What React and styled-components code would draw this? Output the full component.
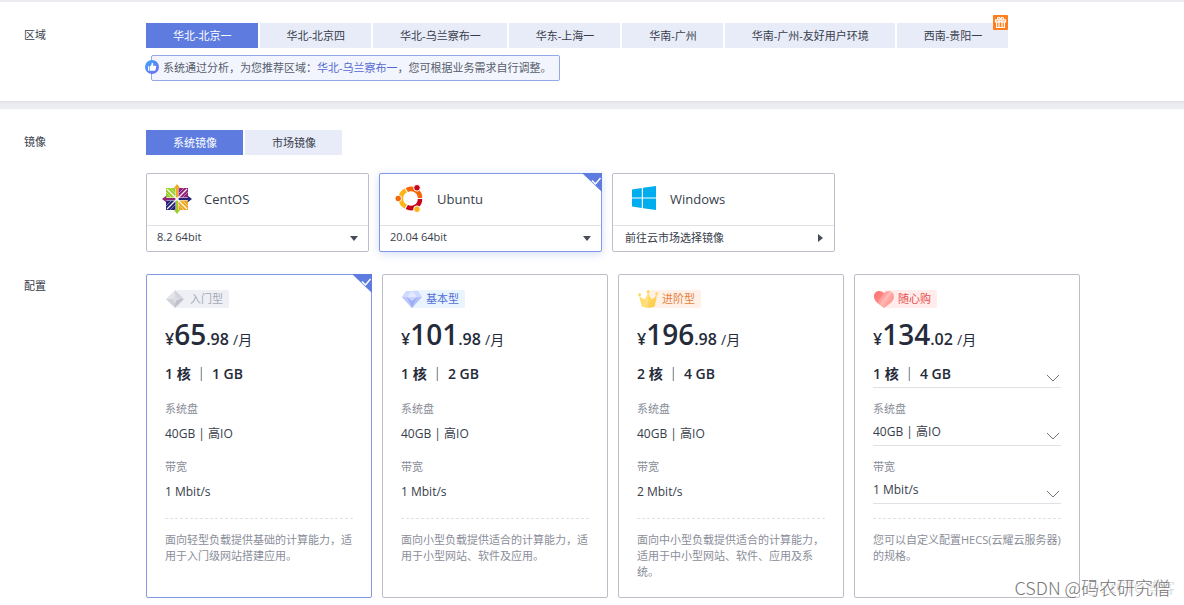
import React, { useState } from 'react';
import styled, { createGlobalStyle } from 'styled-components';

const regions = [
  { name: '华北-北京一' },
  { name: '华北-北京四' },
  { name: '华北-乌兰察布一' },
  { name: '华东-上海一' },
  { name: '华南-广州' },
  { name: '华南-广州-友好用户环境' },
  { name: '西南-贵阳一', gift: true },
];

const imageTypes = ['系统镜像', '市场镜像'];

const systems = [
  { name: 'CentOS', version: '8.2 64bit', Logo: CentosLogo },
  { name: 'Ubuntu', version: '20.04 64bit', Logo: UbuntuLogo },
  { name: 'Windows', market: '前往云市场选择镜像', Logo: WindowsLogo },
];

const plans = [
  {
    name: '入门型', Icon: GreyGem, color: '#a5a9b8', bg: '#eff0f5',
    yuan: '65', cents: '.98', spec: '1 核 ｜ 1 GB', disk: '40GB | 高IO', band: '1 Mbit/s',
    desc: '面向轻型负载提供基础的计算能力，适用于入门级网站搭建应用。',
  },
  {
    name: '基本型', Icon: BlueGem, color: '#5470d6', bg: '#e9f4ff',
    yuan: '101', cents: '.98', spec: '1 核 ｜ 2 GB', disk: '40GB | 高IO', band: '1 Mbit/s',
    desc: '面向小型负载提供适合的计算能力，适用于小型网站、软件及应用。',
  },
  {
    name: '进阶型', Icon: Crown, color: '#e5823c', bg: '#fff1e8',
    yuan: '196', cents: '.98', spec: '2 核 ｜ 4 GB', disk: '40GB | 高IO', band: '2 Mbit/s',
    desc: '面向中小型负载提供适合的计算能力，适用于中小型网站、软件、应用及系统。',
  },
  {
    name: '随心购', Icon: Heart, color: '#e8504f', bg: '#ffeceb', custom: true,
    yuan: '134', cents: '.02', spec: '1 核 ｜ 4 GB', disk: '40GB | 高IO', band: '1 Mbit/s',
    desc: '您可以自定义配置HECS(云耀云服务器)的规格。',
  },
];

function App() {
  const [region, setRegion] = useState(regions[0].name);
  const [imageType, setImageType] = useState(imageTypes[0]);
  const [system, setSystem] = useState('Ubuntu');
  const [plan, setPlan] = useState('入门型');

  return (
    <Page>
      <GlobalStyle />
      <Section>
        <Row>
          <RowLabel>区域</RowLabel>
          <div>
            <Tabs>
              {regions.map((r) => (
                <Tab key={r.name} type="button" $active={r.name === region} onClick={() => setRegion(r.name)}>
                  {r.name}
                  {r.gift && <GiftBadge />}
                </Tab>
              ))}
            </Tabs>
            <Notice>
              <ThumbBadge />
              系统通过分析，为您推荐区域：
              <NoticeLink href="#region">华北-乌兰察布一</NoticeLink>
              ，您可根据业务需求自行调整。
            </Notice>
          </div>
        </Row>
      </Section>
      <Divider />
      <Section>
        <Row>
          <RowLabel>镜像</RowLabel>
          <div>
            <Tabs>
              {imageTypes.map((t) => (
                <Tab key={t} type="button" $active={t === imageType} onClick={() => setImageType(t)}>
                  {t}
                </Tab>
              ))}
            </Tabs>
            <SystemGrid>
              {systems.map((s) => (
                <SystemCard key={s.name} $active={s.name === system}>
                  <SystemHead>
                    <HiddenRadio name="system" checked={s.name === system} onChange={() => setSystem(s.name)} />
                    <s.Logo />
                    {s.name}
                  </SystemHead>
                  {s.market ? (
                    <MarketLink href="#market">
                      {s.market}
                      <svg width="5" height="8" viewBox="0 0 5 8"><path d="M0 0l5 4-5 4z" fill="#464c59" /></svg>
                    </MarketLink>
                  ) : (
                    <VersionBox>
                      <VersionSelect aria-label={`${s.name} version`}>
                        <option>{s.version}</option>
                      </VersionSelect>
                      <svg width="8" height="5" viewBox="0 0 8 5"><path d="M0 0h8L4 5z" fill="#464c59" /></svg>
                    </VersionBox>
                  )}
                  {s.name === system && <Corner />}
                </SystemCard>
              ))}
            </SystemGrid>
          </div>
        </Row>
        <Row>
          <RowLabel>配置</RowLabel>
          <PlanGrid>
            {plans.map((p) => (
              <PlanCard key={p.name} $active={p.name === plan}>
                <PlanHead>
                  <HiddenRadio name="plan" checked={p.name === plan} onChange={() => setPlan(p.name)} />
                  <p.Icon />
                  <PlanTag $color={p.color} $bg={p.bg}>{p.name}</PlanTag>
                </PlanHead>
                <Price>
                  ¥<Yuan>{p.yuan}</Yuan>{p.cents} <Unit>/月</Unit>
                </Price>
                <Field value={p.spec} label="规格" custom={p.custom} strong />
                <FieldLabel>系统盘</FieldLabel>
                <Field value={p.disk} label="系统盘" custom={p.custom} />
                <FieldLabel>带宽</FieldLabel>
                <Field value={p.band} label="带宽" custom={p.custom} />
                <Description>{p.desc}</Description>
                {p.name === plan && <Corner />}
              </PlanCard>
            ))}
          </PlanGrid>
        </Row>
      </Section>
      <Watermark>
        <WatermarkBack>@51CTO博客</WatermarkBack>
        <WatermarkFront>CSDN @码农研究僧</WatermarkFront>
      </Watermark>
    </Page>
  );
}

function Field({ value, label, custom, strong }) {
  if (!custom) {
    return <FieldText $strong={strong}>{value}</FieldText>;
  }
  return (
    <FieldBox>
      <FieldSelect aria-label={label} $strong={strong}>
        <option>{value}</option>
      </FieldSelect>
      <svg width="14" height="8" viewBox="0 0 14 8">
        <path d="M1 1l6 6 6-6" fill="none" stroke="#71757f" />
      </svg>
    </FieldBox>
  );
}

function Corner() {
  return (
    <CornerSvg width="20" height="19" viewBox="0 0 20 19">
      <path d="M0 0h20v19z" fill="#5e7ce0" />
      <path d="M10 7.5l3.500 3.500 5-6" fill="none" stroke="#fff" strokeWidth="1.5" />
    </CornerSvg>
  );
}

function GiftBadge() {
  return (
    <GiftSvg width="15" height="15" viewBox="0 0 15 15">
      <rect width="15" height="15" rx="1" fill="#ff7d1a" />
      <g fill="none" stroke="#fff" strokeWidth="1.2">
        <path d="M2.5 4.8h10v2h-10zM3.6 7v5.5h7.8V7M6 5v7.5M9 5v7.5" />
        <path d="M7.5 4.5C6.5 1.6 3.9 2 4.6 4.5M7.5 4.5C8.5 1.6 11.1 2 10.4 4.5" />
      </g>
    </GiftSvg>
  );
}

function ThumbBadge() {
  return (
    <ThumbSvg width="14" height="14" viewBox="0 0 14 14">
      <defs>
        <linearGradient id="thumb" x1="0" y1="0" x2="1" y2="1">
          <stop offset="0.1" stopColor="#3fa2f8" />
          <stop offset="1" stopColor="#7a68ee" />
        </linearGradient>
      </defs>
      <circle cx="7" cy="7" r="7" fill="url(#thumb)" />
      <path d="M3 6.3h1.4v4.4H3zM5 6.2C6.3 5.4 6.7 4.3 6.7 2.9c1.3-.5 2 .9 1.3 2.8h2.3c.8 0 1 .5.9 1.2l-.6 2.9c-.1.6-.5.9-1.1.9H5z" fill="#fff" />
    </ThumbSvg>
  );
}

function CentosLogo() {
  return (
    <svg width="30" height="30" viewBox="0 0 30 30">
      <path d="M4 4h9.500v9.500H4z" fill="#9ccd2a" />
      <path d="M16.500 4H26v9.500h-9.500z" fill="#932279" />
      <path d="M16.500 16.500H26V26h-9.500z" fill="#efa724" />
      <path d="M4 16.500h9.500V26H4z" fill="#262577" />
      <path d="M5 5l20 20M25 5L5 25" stroke="#fff" strokeWidth="1.1" />
      <path d="M8 4l5.500 5.500M4 8l5.500 5.500M22 4l-5.500 5.500M26 8l-5.500 5.500M26 22l-5.500-5.500M22 26l-5.500-5.500M4 22l5.500-5.500M8 26l5.500-5.500" stroke="#fff" strokeWidth="0.6" opacity="0.7" />
      <path d="M15 0l3.200 4.200H16V13l-1 2-1-2V4.200h-2.200z" fill="#efa724" />
      <path d="M30 15l-4.200 3.200V16H17l-2-1 2-1h8.800v-2.200z" fill="#262577" />
      <path d="M15 30l-3.200-4.200H14V17l1-2 1 2v8.800h2.200z" fill="#9ccd2a" />
      <path d="M0 15l4.200-3.200V14H13l2 1-2 1H4.200v2.200z" fill="#932279" />
      <circle cx="15" cy="15" r="1.800" fill="#fff" opacity="0.8" />
    </svg>
  );
}

function UbuntuLogo() {
  return (
    <svg width="30" height="30" viewBox="0 0 30 30">
      <g fill="none" strokeWidth="4.600">
        <path d="M11.400 22.800A9 9 0 0 1 11.400 6.200" stroke="#fdb515" />
        <path d="M11.400 6.200A9 9 0 0 1 25 14.500" stroke="#f76707" />
        <path d="M25 14.500A9 9 0 0 1 11.400 22.800" stroke="#c8041a" />
      </g>
      <path d="M16 14.500h13M16 14.500L9.500 3.200M16 14.500L9.500 25.800" stroke="#fff" strokeWidth="1.1" />
      <g stroke="#fff" strokeWidth="1">
        <circle cx="3.200" cy="14.500" r="3.300" fill="#f76707" />
        <circle cx="22" cy="3.800" r="3.300" fill="#c8041a" />
        <circle cx="22" cy="25.200" r="3.300" fill="#fdb515" />
      </g>
    </svg>
  );
}

function WindowsLogo() {
  return (
    <svg width="30" height="30" viewBox="0 0 30 30">
      <path d="M4 5.500L13.800 4v9.400H4zM15 3.800L28 2v11.400H15zM4 14.600h9.800V24L4 22.500zM15 14.600h13V26l-13-1.800z" fill="#00adef" />
    </svg>
  );
}

function GreyGem() {
  return (
    <TagIcon width="20" height="18" viewBox="0 0 20 18">
      <path d="M9 0v9H0z" fill="#e4e5ea" />
      <path d="M9 0l9 9H9z" fill="#d3d4db" />
      <path d="M0 9h9v9z" fill="#cfd0d8" />
      <path d="M18 9l-9 9V9z" fill="#bfc0ca" />
      <path d="M9 4l1.500 3.500L14 9l-3.500 1.500L9 14l-1.500-3.500L4 9l3.500-1.500z" fill="#dcdde3" />
    </TagIcon>
  );
}

function BlueGem() {
  return (
    <TagIcon width="20" height="18" viewBox="0 0 20 18">
      <path d="M4.500 1h11L20 7 10 18 0 7z" fill="#b4c0fa" />
      <path d="M4.500 1h11L20 7H0z" fill="#d0d9ff" />
      <path d="M5 7l5-6 5 6z" fill="#e4e9ff" />
      <path d="M0 7h5l5 11z" fill="#bdc9fc" />
      <path d="M5 7h10l-5 11z" fill="#9eaef5" />
      <path d="M5 7h10l-5 4z" fill="#c9d3ff" />
    </TagIcon>
  );
}

function Crown() {
  return (
    <TagIcon width="20" height="18" viewBox="0 0 20 18">
      <defs>
        <linearGradient id="crown" x1="0" y1="0" x2="1" y2="1">
          <stop offset="0" stopColor="#ffe98f" />
          <stop offset="1" stopColor="#ffc83a" />
        </linearGradient>
      </defs>
      <g fill="url(#crown)">
        <path d="M1 5q3 4 5.500 4Q9 7 10 1q1.500 6.500 4 8 3-.5 5-6-.5 8-2.500 13.500Q10 19 4 16.500 2 11 1 5z" />
        <circle cx="1.500" cy="4.500" r="1.500" />
        <circle cx="10" cy="1.500" r="1.500" />
        <circle cx="18.500" cy="3.500" r="1.500" />
      </g>
      <path d="M4 16.500Q7 9 10 3v14.800Q6.500 17.500 4 16.500z" fill="#fff" opacity="0.2" />
    </TagIcon>
  );
}

function Heart() {
  return (
    <TagIcon width="20" height="18" viewBox="0 0 20 18">
      <defs>
        <linearGradient id="heart" x1="0" y1="0.2" x2="1" y2="0.8">
          <stop offset="0" stopColor="#ff7272" />
          <stop offset="0.450" stopColor="#ff8d8a" />
          <stop offset="0.550" stopColor="#ffb5b0" />
          <stop offset="1" stopColor="#ff8582" />
        </linearGradient>
      </defs>
      <path d="M10 3C7-.5 0 .2 0 6.500 0 11 5 14.500 10 18c5-3.500 10-7 10-11.500C20 .2 13-.5 10 3z" fill="url(#heart)" />
      <path d="M10 3c2-2.500 5.500-2.800 7.800-1L6.500 15.500 3.500 13z" fill="#fff" opacity="0.200" />
    </TagIcon>
  );
}

export default App;

const GlobalStyle = createGlobalStyle`
  * {
    box-sizing: border-box;
  }
  body {
    margin: 0;
    background: #fff;
    color: #373d4b;
    font-family: "Open Sans", "Noto Sans CJK SC", sans-serif;
    font-size: 11px;
    line-height: 16px;
  }
  button, select, input {
    font: inherit;
    color: inherit;
  }
  a {
    text-decoration: none;
  }
`;

const Page = styled.div`
  position: relative;
  border-top: 2px solid #ebecf0;
  padding-bottom: 7px;
`;

const Section = styled.section`
  display: flex;
  flex-direction: column;
  gap: 22px;
  padding: 21px 24px 0;
`;

const Divider = styled.div`
  height: 8px;
  margin-top: 20px;
  background: linear-gradient(#dfe0e5, #ecedf2 3px);
`;

const Row = styled.div`
  display: grid;
  grid-template-columns: 122px minmax(0, 1fr);
`;

const RowLabel = styled.div`
  line-height: 24px;
`;

const Tabs = styled.div`
  display: flex;
  gap: 2px;
`;

const Tab = styled.button`
  position: relative;
  height: 25px;
  padding: 0 26px 0 27px;
  border: 0;
  line-height: 24px;
  white-space: nowrap;
  cursor: pointer;
  color: ${(p) => (p.$active ? '#fff' : '#373d4b')};
  background: ${(p) => (p.$active ? '#5e7ce0' : '#e8ecf9')};
`;

const GiftSvg = styled.svg`
  position: absolute;
  top: -8px;
  right: 0;
`;

const Notice = styled.div`
  position: relative;
  width: fit-content;
  margin: 7px 0 0 5px;
  padding: 0 7px 0 11px;
  border: 1px solid #93a7eb;
  border-radius: 2px;
  background: #f2f5fd;
  color: #575d6c;
  line-height: 24px;
`;

const ThumbSvg = styled.svg`
  position: absolute;
  top: 4px;
  left: -7px;
`;

const NoticeLink = styled.a`
  color: #5469cf;
`;

const SystemGrid = styled.div`
  display: grid;
  grid-template-columns: repeat(3, minmax(0, 223px));
  gap: 10px;
  margin-top: 18px;
`;

const Card = styled.div`
  position: relative;
  border: 1px solid ${(p) => (p.$active ? '#7f98e8' : '#bdbec9')};
  border-radius: 2px;
  background: #fff;
`;

const SystemCard = styled(Card)`
  box-shadow: ${(p) => (p.$active ? '0 2px 8px rgba(94, 124, 224, 0.25)' : 'none')};
`;

const SystemHead = styled.label`
  display: flex;
  align-items: center;
  padding: 10px 15px 11px;
  border-bottom: 1px solid #e2e3e8;
  font-size: 13px;
  cursor: pointer;

  svg {
    margin-right: 12px;
  }
`;

const HiddenRadio = styled.input.attrs({ type: 'radio' })`
  appearance: none;
  width: 0;
  height: 0;
  margin: 0;
`;

const VersionBox = styled.div`
  display: grid;
  align-items: center;

  svg {
    grid-area: 1 / 1;
    justify-self: end;
    margin-right: 10px;
    pointer-events: none;
  }
`;

const VersionSelect = styled.select`
  grid-area: 1 / 1;
  appearance: none;
  height: 25px;
  padding: 0 24px 3px 10px;
  border: 0;
  background: none;
`;

const MarketLink = styled.a`
  display: flex;
  align-items: center;
  justify-content: space-between;
  height: 25px;
  padding: 0 11px 2px 12px;
  color: inherit;
`;

const CornerSvg = styled.svg`
  position: absolute;
  top: -1px;
  right: -1px;
`;

const PlanGrid = styled.div`
  display: grid;
  grid-template-columns: repeat(4, minmax(0, 226px));
  gap: 10px;
`;

const PlanCard = styled(Card)`
  padding: 15px 18px 17px;
`;

const PlanHead = styled.label`
  display: flex;
  align-items: center;
  cursor: pointer;
`;

const TagIcon = styled.svg`
  position: relative;
  z-index: 1;
  margin-left: 1px;
`;

const PlanTag = styled.span`
  margin-left: -10px;
  padding: 0 6px 0 14px;
  border-radius: 2px;
  line-height: 18px;
  color: ${(p) => p.$color};
  background: ${(p) => p.$bg};
`;

const Price = styled.div`
  height: 40px;
  margin: 8px 0 5px;
  color: #252b3a;
  font-size: 16px;
  font-weight: 600;
  line-height: 40px;
`;

const Yuan = styled.span`
  font-size: 28px;
  line-height: 36px;
`;

const Unit = styled.span`
  font-size: 14px;
  font-weight: 400;
`;

const FieldText = styled.div`
  height: 27px;
  padding-top: ${(p) => (p.$strong ? 0 : 2)}px;
  color: ${(p) => (p.$strong ? '#252b3a' : '#373d4b')};
  font-size: ${(p) => (p.$strong ? 14 : 12)}px;
  font-weight: ${(p) => (p.$strong ? 600 : 400)};
  line-height: 25px;
`;

const FieldBox = styled.div`
  display: grid;
  align-items: center;
  border-bottom: 1px solid #dfe1e6;

  svg {
    grid-area: 1 / 1;
    justify-self: end;
    margin: 8px 1px 0 0;
    pointer-events: none;
  }
`;

const FieldSelect = styled.select`
  grid-area: 1 / 1;
  appearance: none;
  height: 26px;
  padding: 0 20px 1px 0;
  border: 0;
  background: none;
  color: ${(p) => (p.$strong ? '#252b3a' : '#373d4b')};
  font-size: ${(p) => (p.$strong ? 14 : 12)}px;
  font-weight: ${(p) => (p.$strong ? 600 : 400)};
`;

const FieldLabel = styled.div`
  margin: 13px 0 2px;
  color: #8a8e99;
`;

const Description = styled.p`
  margin: 14px 0 0;
  padding-top: 13px;
  border-top: 1px dashed #dfe1e6;
  color: #8a8e99;
`;

const Watermark = styled.div`
  position: absolute;
  right: 13px;
  bottom: 6px;
  display: grid;
  align-items: center;
  justify-items: end;
  font-family: "Noto Sans CJK SC", sans-serif;
  line-height: 24px;
  pointer-events: none;
`;

const WatermarkBack = styled.span`
  grid-area: 1 / 1;
  margin-right: -4px;
  color: #dedede;
  font-size: 15px;
`;

const WatermarkFront = styled.span`
  grid-area: 1 / 1;
  color: #777;
  font-size: 18px;
  font-weight: 300;
  text-shadow: 1px 1px 0 #fff;
`;
